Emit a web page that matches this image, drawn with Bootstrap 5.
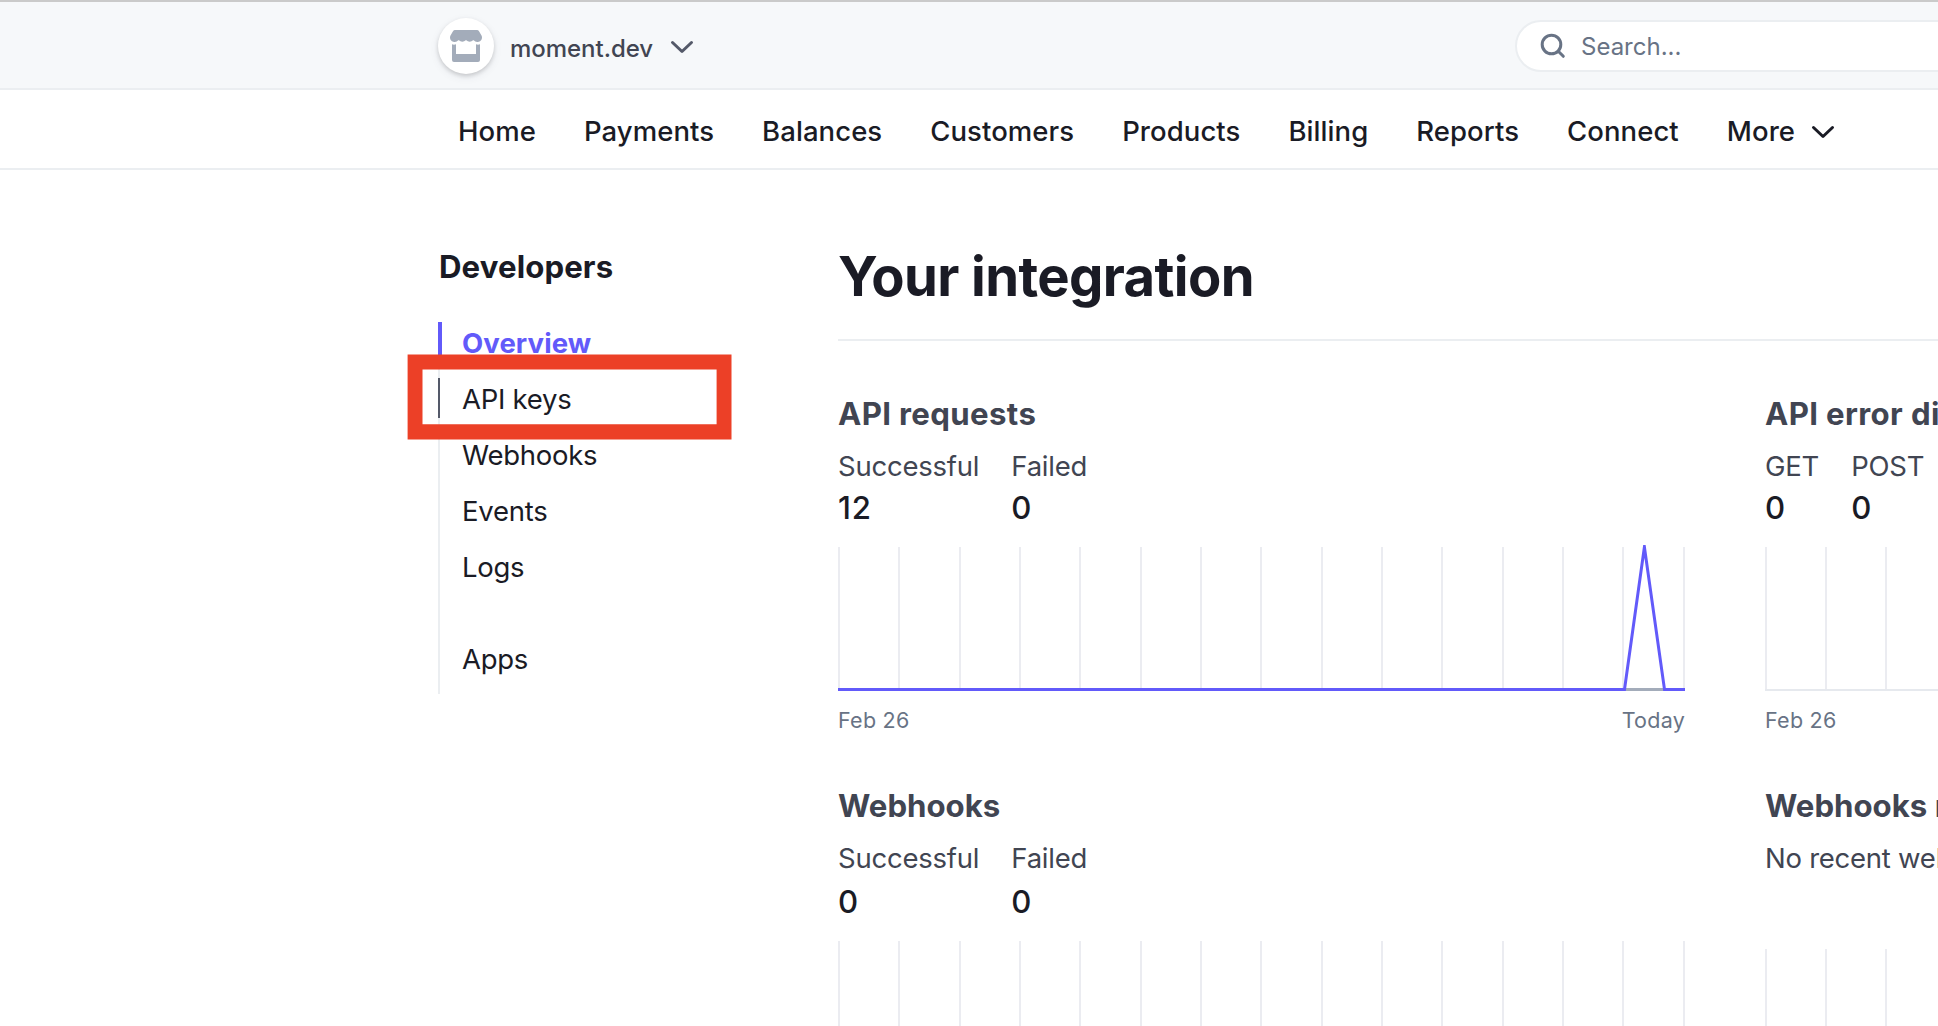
<!DOCTYPE html>
<html lang="en">
<head>
<meta charset="utf-8">
<meta name="viewport" content="width=device-width, initial-scale=1">
<title>Developers</title>
<link href="https://cdn.jsdelivr.net/npm/bootstrap@5.3.0/dist/css/bootstrap.min.css" rel="stylesheet">
<style>
body{font-family:Inter,"Liberation Sans",sans-serif;color:#1a1b25;background:#fff;height:1026px;overflow:hidden;font-size:27.5px;line-height:40px}
.app-top{height:90px;background:#f6f8fa;border-top:2px solid #cacaca;border-bottom:2px solid #ebeef1;padding-left:438px}
.app-avatar{width:56px;height:56px;margin-top:2px;background:#fff;box-shadow:0 2px 4px rgba(0,0,0,.16),0 3px 10px rgba(60,66,87,.08)}
.app-account{font-size:24px;font-weight:500;color:#414552;margin-left:16px;padding-top:8px;letter-spacing:-.03px}
.app-account svg{margin:-5px 0 0 17px}
.app-search{width:500px;height:52px;margin:2px -77px 0 auto;padding-left:23px;background:#fff;border:2px solid #ebeef1;color:#687385;font-size:24px}
.app-search span{margin-left:15px;padding-top:2px}
.app-nav{height:80px;padding:4px 0 0 458px;gap:48px;border-bottom:2px solid #ebeef1;font-weight:500;letter-spacing:.07px}
.app-nav a,.side-list a{color:#1a1b25;text-decoration:none;white-space:nowrap}
.app-nav svg{margin-top:1px}
.app-side{width:732px;padding:77px 0 0 438px;flex:none}
.side-title{font-size:31.2px;font-weight:700;line-height:40px;letter-spacing:.1px;margin:0 0 35px 1px}
.side-list{box-shadow:inset 2px 0 #ebeef1;gap:16px;padding-bottom:16px;letter-spacing:-.26px}
.side-list a{height:40px;line-height:42px;padding-left:24px}
.side-list a.current{font-weight:700;color:#625afa;border-left:4px solid #625afa;padding-left:20px;letter-spacing:.1px}
.side-list a.hovered{border-left:2px solid #545969;padding-left:22px}
.side-list a.apart{margin-top:36px}
.highlight-box{position:absolute;left:407px;top:354px;z-index:2}
.app-main{padding:72px 0 0 106px;width:1206px;flex:none}
.main-title{font-size:54.4px;font-weight:700;line-height:68px;letter-spacing:-.61px;margin:0;padding-bottom:29px;border-bottom:2px solid #ebeef1}
.chart-grid{display:grid;grid-template-columns:847px 847px;column-gap:80px;width:1774px}
.panel{padding-top:53px;color:#414552}
.panel h2{font-size:31.2px;font-weight:700;line-height:40px;margin:0;white-space:nowrap}
.panel h2.spaced{letter-spacing:.36px}
.figures{gap:32px;margin-top:12px;letter-spacing:-.22px}
.figures b{display:block;font-size:31.2px;font-weight:500;color:#1a1b25;line-height:44px;letter-spacing:.9px}
.panel svg{display:block;margin-top:15px}
.axis-dates{font-size:21.5px;line-height:30px;color:#687385;margin-top:14px;letter-spacing:.25px}
.lower{padding-top:51px}
.lower .figures b{line-height:48px}
.lower svg{margin-top:15px}
.lower .note{margin-top:12px;letter-spacing:-.25px;white-space:nowrap}
.lower .note+svg{margin-top:71px}
</style>
<script src="https://cdn.jsdelivr.net/npm/bootstrap@5.3.0/dist/js/bootstrap.bundle.min.js"></script>
</head>
<body>
<svg width="0" height="0" class="position-absolute">
  <defs>
    <g id="gridlines" fill="#ebecf1" shape-rendering="crispEdges">
      <path d="M0 0h2v144h-2zM60 0h2v144h-2zM121 0h2v144h-2zM181 0h2v144h-2zM241 0h2v144h-2zM302 0h2v144h-2zM362 0h2v144h-2zM422 0h2v144h-2zM483 0h2v144h-2zM543 0h2v144h-2zM603 0h2v144h-2zM664 0h2v144h-2zM724 0h2v144h-2zM784 0h2v144h-2zM845 0h2v144h-2z"/>
    </g>
    <g id="gridlines-even" fill="#ebecf1" shape-rendering="crispEdges">
      <path d="M0 0h2v144h-2zM60 0h2v144h-2zM120 0h2v144h-2zM181 0h2v144h-2zM241 0h2v144h-2z"/>
    </g>
  </defs>
</svg>

<header class="app-top d-flex align-items-center">
  <div class="app-avatar rounded-circle d-flex align-items-center justify-content-center">
    <svg width="32" height="32" viewBox="0 0 32 32" fill="#a3acba">
      <path d="M5 0h22q1.300 0 2 1.200l2.500 4.300q.5 1 .5 2.200a4.700 4.700 0 0 1-8.300 2.600h-.6a4.700 4.700 0 0 1-6.800 0h-.6a4.700 4.700 0 0 1-6.800 0h-.6A4.700 4.700 0 0 1 0 7.700q0-1.200.5-2.200L3 1.200Q3.700 0 5 0z"/>
      <path d="M2 14.200q2 .9 4 0V24h20v-9.800q2 .9 4 0V30q0 2-2 2H4q-2 0-2-2z"/>
    </svg>
  </div>
  <div class="app-account d-flex align-items-center">moment.dev
    <svg width="24" height="14" viewBox="0 0 24 14" fill="none" stroke="#545969" stroke-width="3" stroke-linecap="round" stroke-linejoin="round"><path d="M2.500 2.500 12 11.500 21.500 2.500"/></svg>
  </div>
  <div class="app-search rounded-pill d-flex align-items-center">
    <svg width="26" height="26" viewBox="0 0 26 26" fill="none" stroke="#687385" stroke-width="3" stroke-linecap="round"><circle cx="11.500" cy="11.500" r="9.300"/><path d="m18.300 18.300 5 5"/></svg>
    <span>Search...</span>
  </div>
</header>

<nav class="app-nav d-flex align-items-center">
  <a href="#">Home</a><a href="#">Payments</a><a href="#">Balances</a><a href="#">Customers</a><a href="#">Products</a><a href="#">Billing</a><a href="#">Reports</a><a href="#">Connect</a>
  <a href="#" class="d-flex align-items-center">More
    <svg class="ms-3" width="24" height="14" viewBox="0 0 24 14" fill="none" stroke="#1a1b25" stroke-width="3" stroke-linecap="round" stroke-linejoin="round"><path d="M2.500 2.500 12 11.500 21.500 2.500"/></svg>
  </a>
</nav>

<div class="d-flex">
  <aside class="app-side">
    <h1 class="side-title">Developers</h1>
    <nav class="side-list d-flex flex-column">
      <a href="#" class="current">Overview</a>
      <a href="#" class="hovered">API keys</a>
      <a href="#">Webhooks</a>
      <a href="#">Events</a>
      <a href="#">Logs</a>
      <a href="#" class="apart">Apps</a>
    </nav>
  </aside>

  <main class="app-main overflow-hidden">
    <h1 class="main-title">Your integration</h1>
    <div class="chart-grid">
      <section class="panel">
        <h2 class="spaced">API requests</h2>
        <div class="figures d-flex"><div>Successful<b>12</b></div><div>Failed<b>0</b></div></div>
        <svg width="847" height="146" viewBox="0 -2 847 146">
          <use href="#gridlines"/>
          <path d="M0 142.500H847" stroke="#a3acba" stroke-width="3"/>
          <path d="M0 142.500H786.500L806.400 0 826.500 142.500H847" fill="none" stroke="#625afa" stroke-width="3" stroke-miterlimit="20"/>
        </svg>
        <div class="axis-dates d-flex justify-content-between"><span>Feb 26</span><span>Today</span></div>
      </section>
      <section class="panel">
        <h2 class="spaced">API error distribution</h2>
        <div class="figures d-flex"><div>GET<b>0</b></div><div>POST<b>0</b></div></div>
        <svg width="847" height="146" viewBox="0 -2 847 146">
          <use href="#gridlines-even"/>
          <path d="M0 143H847" stroke="#e6e9ee" stroke-width="2"/>
        </svg>
        <div class="axis-dates"><span>Feb 26</span></div>
      </section>
      <section class="panel lower">
        <h2>Webhooks</h2>
        <div class="figures d-flex"><div>Successful<b>0</b></div><div>Failed<b>0</b></div></div>
        <svg width="847" height="144"><use href="#gridlines"/></svg>
      </section>
      <section class="panel lower">
        <h2>Webhooks response time</h2>
        <div class="note">No recent webhooks</div>
        <svg width="847" height="144"><use href="#gridlines-even"/></svg>
      </section>
    </div>
  </main>
</div>
<svg class="highlight-box" width="326" height="87"><path fill="#ec4027" fill-rule="evenodd" d="M.6.5H324.500V85.500H.6zM15.500 15.500V70.300H309.600V15.500z"/></svg>
</body>
</html>
